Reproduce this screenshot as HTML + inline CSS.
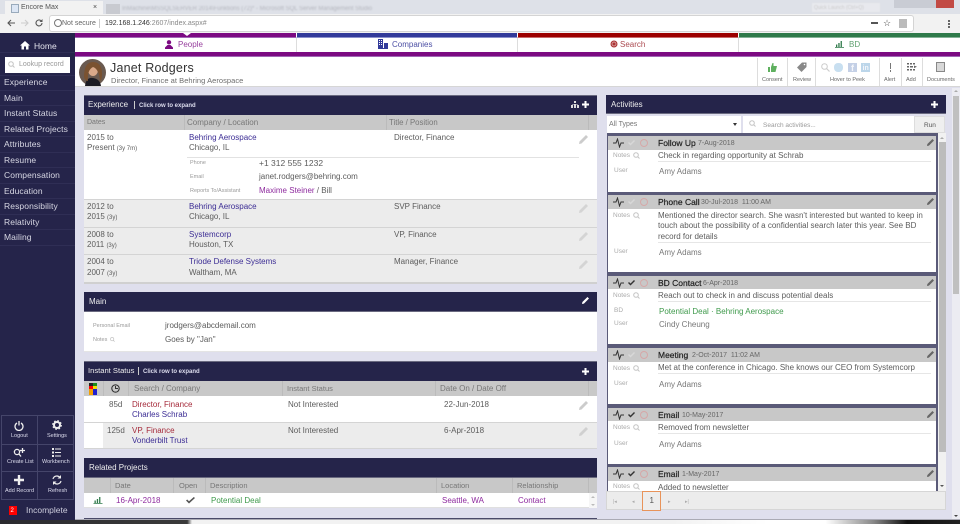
<!DOCTYPE html>
<html><head><meta charset="utf-8"><title>Encore Max</title>
<style>
html,body{margin:0;padding:0;width:960px;height:524px;overflow:hidden;background:#dfdfed;font-family:"Liberation Sans",sans-serif;color:#555}
body{filter:blur(.35px)}
div,span.a,svg.a{position:absolute}
.t{position:absolute;white-space:nowrap;line-height:10px;font-size:8px;color:#5c5c5c}
.s{font-size:8.5px;color:#d8d8e4;left:4px;letter-spacing:.1px}
.sep{left:0;width:75px;height:1px;background:#2f2e55}
.hd{background:#25244a}
.w{color:#fff}
.col{background:#c8c8c8}
.blue{color:#3b2c94}
.pur{color:#8e2a9e}
.red{color:#a52a3a}
.grn{color:#3f9a4c}
.lab{font-size:5.5px;color:#9a9a9a}
.nl{font-size:6.5px;color:#aaa}
.cardh{left:608px;width:328px;height:14px;background:#c8c8c8}
.cardb{left:608px;width:328px;background:#fff}
.tt{font-size:8.5px;color:#222;-webkit-text-stroke:.2px #222}
.dd{font-size:7px;color:#666}
.tl{font-size:5.5px;color:#666}
</style></head><body>

<svg width="0" height="0" style="position:absolute"><defs>
<path id="pen" d="M7 0 9 2 2.500 8.500 0 9 .5 6.500z"/>
<path id="pulse" d="M0 5h3l1.500-4 2 8L8 5h3" fill="none" stroke="#333" stroke-width="1"/>
<path id="chk" d="M0 3 2.500 5.500 7 1 6 0 2.500 3.500 1 2z"/>
<g id="mag"><circle cx="3" cy="3" r="2.300" fill="none" stroke="#c4c4c4"/><path d="M4.500 4.500 6.500 6.500" stroke="#c4c4c4"/></g>
</defs></svg>

<!-- browser chrome -->
<div style="left:0;top:0;width:960px;height:14px;background:#dee1e8"></div>
<div style="left:5px;top:1px;width:98px;height:13px;background:#f2f2f2"></div>
<div style="left:106px;top:4px;width:14px;height:10px;background:#c8cad0"></div>
<div class="t" style="left:21px;top:3px;font-size:7px;color:#555">Encore Max</div>
<div class="t" style="left:93px;top:3px;font-size:7px;color:#444">×</div>
<div style="left:11px;top:4px;width:6px;height:7px;background:#dce6f4;border:1px solid #9ab"></div>
<div class="t" style="left:122px;top:4px;font-size:6px;color:#b4b6be;filter:blur(.7px)">InMachine\MSSQLSERVER 2014\Funktions (72)* - Microsoft SQL Server Management Studio</div>
<div class="t" style="left:812px;top:3px;width:66px;height:9px;background:#e8e9ee;font-size:5px;color:#ccc;padding-left:2px;filter:blur(.4px)">Quick Launch (Ctrl+Q)</div>
<div style="left:894px;top:0;width:46px;height:8px;background:#c9ccd4"></div>
<div style="left:936px;top:0;width:18px;height:8px;background:#c24a44"></div>
<div style="left:0;top:14px;width:960px;height:19px;background:#f2f2f2"></div>
<div style="left:50px;top:16px;width:863px;height:15px;background:#fff;border-radius:2px;box-shadow:0 0 0 1px #d4d4d4"></div>
<svg class="a" style="left:7px;top:19px" width="8" height="8" viewBox="0 0 8 8"><path d="M8 4H1M4 1 1 4l3 3" fill="none" stroke="#555" stroke-width="1.100"/></svg>
<svg class="a" style="left:21px;top:19px" width="8" height="8" viewBox="0 0 8 8"><path d="M0 4h7M4 1l3 3-3 3" fill="none" stroke="#ccc" stroke-width="1.100"/></svg>
<svg class="a" style="left:35px;top:19px" width="8" height="8" viewBox="0 0 8 8"><path d="M7 4a3 3 0 1 1-1-2.300" fill="none" stroke="#555" stroke-width="1.100"/><path d="M7.500 0v3h-3z" fill="#555"/></svg>
<div style="left:54px;top:19px;width:6px;height:6px;border:1px solid #777;border-radius:50%"></div>
<div class="t" style="left:62px;top:19px;font-size:7px;color:#666">Not secure</div>
<div style="left:99px;top:19px;width:1px;height:9px;background:#ccc"></div>
<div class="t" style="left:105px;top:19px;font-size:7px;color:#333">192.168.1.246<span style="color:#888">:2607/index.aspx#</span></div>
<div style="left:871px;top:22px;width:7px;height:2px;background:#555"></div>
<div class="t" style="left:883px;top:18px;font-size:9px;color:#444">☆</div>
<div style="left:899px;top:19px;width:8px;height:9px;background:#bbb"></div>
<div style="left:948px;top:20px;width:2px;height:2px;background:#666;box-shadow:0 3px 0 #666,0 6px 0 #666"></div>

<!-- sidebar -->
<div style="left:0;top:33px;width:75px;height:487px;background:#25244a"></div>
<svg class="a" style="left:20px;top:40px" width="10" height="10" viewBox="0 0 10 10"><path d="M5 1 0 5.500h1.500V9.500h2.500V6.500h2V9.500h2.500V5.500H10Z" fill="#fff"/></svg>
<div class="t" style="left:34px;top:41px;font-size:8.500px;color:#e4e4ee">Home</div>
<div class="sep" style="top:52px"></div>
<div style="left:5px;top:57px;width:65px;height:16px;background:#fff"></div>
<svg class="a" style="left:8px;top:61px" width="7" height="7" viewBox="0 0 7 7"><use href="#mag"/></svg>
<div class="t" style="left:19px;top:60px;font-size:7px;color:#999">Lookup record</div>
<div class="sep" style="top:75px"></div>
<div class="t s" style="top:77px">Experience</div><div class="sep" style="top:90px"></div>
<div class="t s" style="top:93px">Main</div><div class="sep" style="top:105px"></div>
<div class="t s" style="top:108px">Instant Status</div><div class="sep" style="top:121px"></div>
<div class="t s" style="top:124px">Related Projects</div><div class="sep" style="top:136px"></div>
<div class="t s" style="top:139px">Attributes</div><div class="sep" style="top:152px"></div>
<div class="t s" style="top:155px">Resume</div><div class="sep" style="top:167px"></div>
<div class="t s" style="top:170px">Compensation</div><div class="sep" style="top:183px"></div>
<div class="t s" style="top:186px">Education</div><div class="sep" style="top:198px"></div>
<div class="t s" style="top:201px">Responsibility</div><div class="sep" style="top:214px"></div>
<div class="t s" style="top:217px">Relativity</div><div class="sep" style="top:229px"></div>
<div class="t s" style="top:232px">Mailing</div><div class="sep" style="top:245px"></div>

<div style="left:1px;top:415px;width:73px;height:85px;border:1px solid #45456a;box-sizing:border-box"></div>
<div style="left:37px;top:415px;width:1px;height:85px;background:#45456a"></div>
<div style="left:1px;top:444px;width:73px;height:1px;background:#45456a"></div>
<div style="left:1px;top:471px;width:73px;height:1px;background:#45456a"></div>
<svg class="a" style="left:14px;top:420px" width="10" height="11" viewBox="0 0 10 11"><path d="M3 3a4 4 0 1 0 4 0M5 1v4.500" fill="none" stroke="#eee" stroke-width="1.300"/></svg>
<div class="t" style="left:11px;top:431px;font-size:5.500px;color:#dde">Logout</div>
<svg class="a" style="left:52px;top:420px" width="10" height="10" viewBox="0 0 10 10"><circle cx="5" cy="5" r="3" fill="none" stroke="#eee" stroke-width="2"/><circle cx="5" cy="5" r="4.300" fill="none" stroke="#eee" stroke-dasharray="1.700 1.700" stroke-width="1.200"/></svg>
<div class="t" style="left:47px;top:431px;font-size:5.500px;color:#dde">Settings</div>
<svg class="a" style="left:13px;top:448px" width="12" height="9" viewBox="0 0 12 9"><circle cx="4" cy="4" r="2.600" fill="none" stroke="#eee" stroke-width="1.300"/><path d="M6 6 8 8.500M9.500 0v5M7 2.500h5" stroke="#eee" stroke-width="1.300"/></svg>
<div class="t" style="left:7px;top:457px;font-size:5.500px;color:#dde">Create List</div>
<svg class="a" style="left:52px;top:448px" width="9" height="9" viewBox="0 0 9 9"><path d="M0 0h2v2H0zM0 3.500h2v2H0zM0 7h2v2H0zM3 .5h6v1H3zM3 4h6v1H3zM3 7.500h6v1H3z" fill="#eee"/></svg>
<div class="t" style="left:42px;top:457px;font-size:5.500px;color:#dde">Workbench</div>
<svg class="a" style="left:14px;top:475px" width="10" height="10" viewBox="0 0 10 10"><path d="M3.800 0h2.400v3.800H10v2.400H6.200V10H3.800V6.200H0V3.800h3.800z" fill="#eee"/></svg>
<div class="t" style="left:5px;top:486px;font-size:5.500px;color:#dde">Add Record</div>
<svg class="a" style="left:52px;top:475px" width="10" height="10" viewBox="0 0 10 10"><path d="M1 4a4 4 0 0 1 7-1.500M9 6a4 4 0 0 1-7 1.500" fill="none" stroke="#eee" stroke-width="1.200"/><path d="M9 0v3.500H5.500zM1 10V6.500h3.500z" fill="#eee"/></svg>
<div class="t" style="left:48px;top:486px;font-size:5.500px;color:#dde">Refresh</div>
<div style="left:9px;top:506px;width:8px;height:9px;background:#f00"></div>
<div class="t" style="left:10.500px;top:506px;font-size:6px;color:#fff">2</div>
<div class="t" style="left:26px;top:505px;font-size:8.500px;color:#ccccdc">Incomplete</div>

<!-- nav tabs -->
<div style="left:75px;top:33px;width:885px;height:24px;background:#fff"></div>
<div style="left:75px;top:33px;width:221px;height:5px;background:#7c0a82;border-bottom:1px solid #a267b5;box-sizing:border-box"></div>
<div style="left:296px;top:33px;width:221px;height:5px;background:#323a9a;border-bottom:1px solid #8b90cc;box-sizing:border-box;border-left:1px solid #fff"></div>
<div style="left:517px;top:33px;width:221px;height:5px;background:#9c0000;border-bottom:1px solid #c86a6a;box-sizing:border-box;border-left:1px solid #fff"></div>
<div style="left:738px;top:33px;width:222px;height:5px;background:#2f7a4a;border-bottom:1px solid #84b296;box-sizing:border-box;border-left:1px solid #fff"></div>
<div style="left:183px;top:33px;width:0;height:0;border-left:4px solid transparent;border-right:4px solid transparent;border-top:3px solid #fff"></div>
<div style="left:296px;top:38px;width:1px;height:14px;background:#ddd"></div>
<div style="left:517px;top:38px;width:1px;height:14px;background:#ddd"></div>
<div style="left:738px;top:38px;width:1px;height:14px;background:#ddd"></div>
<div style="left:75px;top:52px;width:885px;height:5px;background:#7c0a82;border-bottom:1px solid #a267b5;box-sizing:border-box"></div>
<svg class="a" style="left:165px;top:40px" width="8" height="9" viewBox="0 0 8 9"><circle cx="4" cy="2.300" r="2.200" fill="#7c0a82"/><path d="M0 9V7.500L2.500 5h3L8 7.500V9z" fill="#7c0a82"/></svg>
<div class="t" style="left:178px;top:39.500px;font-size:8px;color:#98409e">People</div>
<svg class="a" style="left:378px;top:39px" width="10" height="10" viewBox="0 0 10 10"><path d="M0 0h5v9H0zM6 4h4v5H6z" fill="#323a9a"/><path d="M1 1.500h1M3 1.500h1M1 3.500h1M3 3.500h1M1 5.500h1M3 5.500h1" stroke="#fff"/><path d="M0 9.500h10" stroke="#323a9a"/></svg>
<div class="t" style="left:392px;top:39.500px;font-size:8px;color:#4c4fa4">Companies</div>
<svg class="a" style="left:610px;top:40px" width="8" height="8" viewBox="0 0 8 8"><circle cx="4" cy="4" r="3.500" fill="#a33"/><circle cx="4" cy="4" r="2" fill="none" stroke="#e8c0c0" stroke-width=".7"/></svg>
<div class="t" style="left:620px;top:39.500px;font-size:8px;color:#ab4a50">Search</div>
<svg class="a" style="left:835px;top:40px" width="9" height="8" viewBox="0 0 9 8"><path d="M1 4.500h1.300V7H1zM3.300 3H4.600V7H3.300zM5.600 1H6.900V7H5.600zM0 7.300h9V8H0z" fill="#2f7a4a"/></svg>
<div class="t" style="left:849px;top:39.500px;font-size:8px;color:#5fa06f">BD</div>

<!-- profile header -->
<div style="left:75px;top:57px;width:885px;height:30px;background:#fff;border-bottom:1px solid #d6d6d6;box-sizing:border-box"></div>
<svg class="a" style="left:79px;top:59px" width="27" height="27" viewBox="0 0 27 27"><circle cx="13.500" cy="13.500" r="13.500" fill="#6a5a50"/><ellipse cx="14" cy="11" rx="5" ry="6" fill="#d9a98a"/><path d="M6 27q1-9 8-8t8 8z" fill="#1c1c24"/><path d="M5 18Q5 3 14 3t9 12q0 6-2 7-1-12-7-14-6 3-5 14-3 0-4-4z" fill="#7a5230"/></svg>
<div class="t" style="left:110px;top:62px;font-size:12.500px;line-height:13px;color:#333;letter-spacing:.2px">Janet Rodgers</div>
<div class="t" style="left:111px;top:76px;font-size:7.500px;color:#6e6e6e;letter-spacing:.05px">Director, Finance at Behring Aerospace</div>
<div style="left:757px;top:58px;width:1px;height:28px;background:#ddd"></div>
<div style="left:787px;top:58px;width:1px;height:28px;background:#ddd"></div>
<div style="left:815px;top:58px;width:1px;height:28px;background:#ddd"></div>
<div style="left:879px;top:58px;width:1px;height:28px;background:#ddd"></div>
<div style="left:901px;top:58px;width:1px;height:28px;background:#ddd"></div>
<div style="left:922px;top:58px;width:1px;height:28px;background:#ddd"></div>
<svg class="a" style="left:768px;top:63px" width="9" height="9" viewBox="0 0 9 9"><path d="M0 4h2v5H0zM3 4l1.500-4h1l0 3H9L7.500 9H3z" fill="#5fb05f"/></svg>
<svg class="a" style="left:797px;top:62px" width="10" height="10" viewBox="0 0 10 10"><path d="M5 .5h4.500V5L4.500 10 0 5.500z" fill="#888"/><circle cx="7.500" cy="2.500" r=".8" fill="#fff"/></svg>
<svg class="a" style="left:821px;top:63px" width="9" height="9" viewBox="0 0 9 9"><circle cx="3.500" cy="3.500" r="2.800" fill="none" stroke="#ccc"/><path d="M5.500 5.500 8.500 8.500" stroke="#ccc" stroke-width="1.200"/></svg>
<div style="left:834px;top:63px;width:9px;height:9px;background:#c8dff0;border-radius:4px"></div>
<div style="left:848px;top:63px;width:9px;height:9px;background:#c4d0e6"></div>
<div class="t" style="left:851px;top:63px;font-size:9px;font-weight:bold;color:#f4f6fb">f</div>
<div style="left:861px;top:63px;width:9px;height:9px;background:#bcd6ea"></div>
<div class="t" style="left:862.500px;top:64px;font-size:7px;font-weight:bold;color:#f4f6fb">in</div>
<div style="left:889.500px;top:63px;width:1.500px;height:6px;background:#777"></div>
<div style="left:889.500px;top:70px;width:1.500px;height:1.500px;background:#777"></div>
<svg class="a" style="left:907px;top:63px" width="10" height="8" viewBox="0 0 10 8"><path d="M0 0h2v1.500H0zM3 0h2v1.500H3zM6 0h2v1.500H6zM0 3h2v1.500H0zM3 3h3v1.500H3zM0 6h2v1.500H0zM3 6h2v1.500H3zM6 6h2v1.500H6zM7 2.500l3 1.300-3 1.300z" fill="#666"/></svg>
<div style="left:936px;top:62px;width:7px;height:8px;border:1px solid #888;background:#d8d8d8"></div>
<div class="t tl" style="left:762px;top:75px">Consent</div>
<div class="t tl" style="left:793px;top:75px">Review</div>
<div class="t tl" style="left:830px;top:75px">Hover to Peek</div>
<div class="t tl" style="left:884px;top:75px">Alert</div>
<div class="t tl" style="left:906px;top:75px">Add</div>
<div class="t tl" style="left:927px;top:75px">Documents</div>

<!-- Experience panel -->
<div class="hd" style="left:84px;top:95px;width:513px;height:20px;border-top:1px solid #6a6a80;box-sizing:border-box"></div>
<div class="t w" style="left:88px;top:100px;font-size:8px;color:#eee">Experience</div>
<div style="left:134px;top:101px;width:1px;height:8px;background:#ccc"></div>
<div class="t w" style="left:139px;top:101px;font-size:6px;font-weight:bold;color:#dde">Click row to expand</div>
<svg class="a" style="left:571px;top:101px" width="8" height="7" viewBox="0 0 8 7"><path d="M3 0h2v2H3zM0 4h2v3H0zM3 3h2v4H3zM6 4h2v3H6zM1 3h6v.5H1z" fill="#ddd"/></svg>
<svg class="a" style="left:582px;top:101px" width="7" height="7" viewBox="0 0 7 7"><path d="M2.500 0h2v2.500H7v2H4.500V7h-2V4.500H0v-2h2.500z" fill="#fff"/></svg>
<div class="col" style="left:84px;top:115px;width:513px;height:15px"></div>
<div style="left:184px;top:115px;width:1px;height:15px;background:#bbb"></div>
<div style="left:386px;top:115px;width:1px;height:15px;background:#bbb"></div>
<div style="left:588px;top:115px;width:1px;height:15px;background:#bbb"></div>
<div class="t" style="left:87px;top:118px;font-size:7px;color:#777">Dates</div>
<div class="t" style="left:187px;top:118px;font-size:8px;color:#777">Company / Location</div>
<div class="t" style="left:389px;top:118px;font-size:7.800px;color:#777">Title / Position</div>
<div style="left:84px;top:130px;width:513px;height:69px;background:#fff"></div>
<div style="left:84px;top:199px;width:513px;height:85px;background:#ececec"></div>
<div style="left:84px;top:199px;width:513px;height:1px;background:#d4d4d4"></div>
<div style="left:84px;top:227px;width:513px;height:1px;background:#d4d4d4"></div>
<div style="left:84px;top:254px;width:513px;height:1px;background:#d4d4d4"></div>
<div style="left:84px;top:282px;width:513px;height:2px;background:#d0d0d0"></div>
<div style="left:187px;top:157px;width:392px;height:1px;background:#e2e2e2"></div>

<div class="t" style="left:87px;top:133px">2015 to</div>
<div class="t" style="left:87px;top:143px">Present <span style="font-size:6px">(3y 7m)</span></div>
<div class="t blue" style="left:189px;top:133px">Behring Aerospace</div>
<div class="t" style="left:189px;top:143px">Chicago, IL</div>
<div class="t" style="left:394px;top:133px">Director, Finance</div>
<div class="t lab" style="left:190px;top:158px">Phone</div>
<div class="t" style="left:259px;top:158px;font-size:8.500px">+1 312 555 1232</div>
<div class="t lab" style="left:190px;top:172px">Email</div>
<div class="t" style="left:259px;top:172px">janet.rodgers@behring.com</div>
<div class="t lab" style="left:190px;top:186px">Reports To/Assistant</div>
<div class="t" style="left:259px;top:186px"><span class="pur">Maxime Steiner</span> / Bill</div>

<div class="t" style="left:87px;top:202px">2012 to</div>
<div class="t" style="left:87px;top:212px">2015 <span style="font-size:6px">(3y)</span></div>
<div class="t blue" style="left:189px;top:202px">Behring Aerospace</div>
<div class="t" style="left:189px;top:212px">Chicago, IL</div>
<div class="t" style="left:394px;top:202px">SVP Finance</div>

<div class="t" style="left:87px;top:230px">2008 to</div>
<div class="t" style="left:87px;top:240px">2011 <span style="font-size:6px">(3y)</span></div>
<div class="t blue" style="left:189px;top:230px">Systemcorp</div>
<div class="t" style="left:189px;top:240px">Houston, TX</div>
<div class="t" style="left:394px;top:230px">VP, Finance</div>

<div class="t" style="left:87px;top:257px">2004 to</div>
<div class="t" style="left:87px;top:268px">2007 <span style="font-size:6px">(3y)</span></div>
<div class="t blue" style="left:189px;top:257px">Triode Defense Systems</div>
<div class="t" style="left:189px;top:268px">Waltham, MA</div>
<div class="t" style="left:394px;top:257px">Manager, Finance</div>

<svg class="a" style="left:579px;top:135px" width="9" height="9"><use href="#pen" fill="#ccc"/></svg>
<svg class="a" style="left:579px;top:204px" width="9" height="9"><use href="#pen" fill="#d4d4d4"/></svg>
<svg class="a" style="left:579px;top:232px" width="9" height="9"><use href="#pen" fill="#d4d4d4"/></svg>
<svg class="a" style="left:579px;top:260px" width="9" height="9"><use href="#pen" fill="#d4d4d4"/></svg>

<!-- Main panel -->
<div class="hd" style="left:84px;top:292px;width:513px;height:20px;border-bottom:1px solid #6a6a80;box-sizing:border-box"></div>
<div class="t w" style="left:89px;top:297px;font-size:8px;color:#eee">Main</div>
<svg class="a" style="left:582px;top:297px" width="7" height="7" viewBox="0 0 9 9"><use href="#pen" fill="#fff"/></svg>
<div style="left:84px;top:312px;width:513px;height:40px;background:#fff;border-bottom:1px solid #e4e4e4;box-sizing:border-box"></div>
<div class="t lab" style="left:93px;top:321px">Personal Email</div>
<div class="t" style="left:165px;top:321px">jrodgers@abcdemail.com</div>
<div class="t lab" style="left:93px;top:335px">Notes</div>
<svg class="a" style="left:110px;top:337px" width="5" height="5" viewBox="0 0 7 7"><use href="#mag"/></svg>
<div class="t" style="left:165px;top:335px">Goes by "Jan"</div>

<!-- Instant status -->
<div class="hd" style="left:84px;top:361px;width:513px;height:20px;border-top:1px solid #6a6a80;box-sizing:border-box"></div>
<div class="t w" style="left:88px;top:366px;font-size:7.600px;color:#eee">Instant Status</div>
<div style="left:138px;top:367px;width:1px;height:8px;background:#ccc"></div>
<div class="t w" style="left:143px;top:367px;font-size:6px;font-weight:bold;color:#dde">Click row to expand</div>
<svg class="a" style="left:582px;top:368px" width="7" height="7" viewBox="0 0 7 7"><path d="M2.500 0h2v2.500H7v2H4.500V7h-2V4.500H0v-2h2.500z" fill="#fff"/></svg>
<div class="col" style="left:84px;top:381px;width:513px;height:15px"></div>
<div style="left:103px;top:381px;width:1px;height:15px;background:#bbb"></div>
<div style="left:128px;top:381px;width:1px;height:15px;background:#bbb"></div>
<div style="left:282px;top:381px;width:1px;height:15px;background:#bbb"></div>
<div style="left:435px;top:381px;width:1px;height:15px;background:#bbb"></div>
<div style="left:588px;top:381px;width:1px;height:15px;background:#bbb"></div>
<div style="left:89px;top:383px;width:4px;height:6px;background:#f00"></div><div style="left:93px;top:383px;width:4px;height:6px;background:#1a8a1a"></div>
<div style="left:89px;top:389px;width:4px;height:6px;background:#f4a000"></div><div style="left:93px;top:389px;width:4px;height:6px;background:#2020d0"></div>
<div style="left:89px;top:383px;width:4px;height:3px;background:#222"></div><div style="left:93px;top:386px;width:4px;height:3px;background:#f0e000"></div>
<svg class="a" style="left:111px;top:384px" width="9" height="9" viewBox="0 0 9 9"><circle cx="4.500" cy="4.500" r="3.700" fill="none" stroke="#333" stroke-width="1.100"/><path d="M4.500 2v2.500H7" fill="none" stroke="#333"/></svg>
<div class="t" style="left:134px;top:384px;color:#777;font-size:8px">Search / Company</div>
<div class="t" style="left:287px;top:384px;color:#777;font-size:7.500px">Instant Status</div>
<div class="t" style="left:440px;top:384px;color:#777;font-size:8px">Date On / Date Off</div>
<div style="left:84px;top:396px;width:513px;height:26px;background:#fff"></div>
<div style="left:84px;top:422px;width:513px;height:1px;background:#d4d4d4"></div>
<div style="left:103px;top:423px;width:494px;height:25px;background:#ececec"></div>
<div style="left:84px;top:423px;width:19px;height:25px;background:#fff"></div>
<div style="left:84px;top:448px;width:513px;height:1px;background:#d4d4d4"></div>
<div class="t" style="left:109px;top:400px">85d</div>
<div class="t red" style="left:132px;top:400px">Director, Finance</div>
<div class="t blue" style="left:132px;top:410px">Charles Schrab</div>
<div class="t" style="left:288px;top:400px">Not Interested</div>
<div class="t" style="left:444px;top:400px">22-Jun-2018</div>
<div class="t" style="left:107px;top:426px">125d</div>
<div class="t red" style="left:132px;top:426px">VP, Finance</div>
<div class="t blue" style="left:132px;top:436px">Vonderbilt Trust</div>
<div class="t" style="left:288px;top:426px">Not Interested</div>
<div class="t" style="left:444px;top:426px">6-Apr-2018</div>
<svg class="a" style="left:579px;top:401px" width="9" height="9"><use href="#pen" fill="#ccc"/></svg>
<svg class="a" style="left:579px;top:427px" width="9" height="9"><use href="#pen" fill="#d0d0d0"/></svg>

<!-- Related projects -->
<div class="hd" style="left:84px;top:458px;width:513px;height:20px;border-bottom:1px solid #6a6a80;box-sizing:border-box"></div>
<div class="t w" style="left:89px;top:463px;font-size:8px;color:#eee">Related Projects</div>
<div class="col" style="left:84px;top:478px;width:513px;height:15px"></div>
<div style="left:110px;top:478px;width:1px;height:15px;background:#bbb"></div>
<div style="left:173px;top:478px;width:1px;height:15px;background:#bbb"></div>
<div style="left:205px;top:478px;width:1px;height:15px;background:#bbb"></div>
<div style="left:436px;top:478px;width:1px;height:15px;background:#bbb"></div>
<div style="left:512px;top:478px;width:1px;height:15px;background:#bbb"></div>
<div style="left:588px;top:478px;width:1px;height:15px;background:#bbb"></div>
<div class="t" style="left:115px;top:481px;color:#777;font-size:7.500px">Date</div>
<div class="t" style="left:179px;top:481px;color:#777;font-size:7.500px">Open</div>
<div class="t" style="left:210px;top:481px;color:#777;font-size:7.500px">Description</div>
<div class="t" style="left:441px;top:481px;color:#777;font-size:7.500px">Location</div>
<div class="t" style="left:517px;top:481px;color:#777;font-size:7.500px">Relationship</div>
<div style="left:84px;top:493px;width:513px;height:15px;background:#fff;border-bottom:1px solid #e0e0e0;box-sizing:border-box"></div>
<svg class="a" style="left:93px;top:496px" width="10" height="8" viewBox="0 0 9 8"><path d="M1 4.500h1.300V7H1zM3.300 3H4.600V7H3.300zM5.600 1H6.900V7H5.600zM0 7.300h9V8H0z" fill="#2f7a4a"/></svg>
<div class="t pur" style="left:116px;top:496px">16-Apr-2018</div>
<svg class="a" style="left:186px;top:497px" width="9" height="7" viewBox="0 0 9 7"><path d="M0 3.500 3 6.500 9 1 7.800 0 3 4.300 1.200 2.500z" fill="#555"/></svg>
<div class="t grn" style="left:211px;top:496px">Potential Deal</div>
<div class="t pur" style="left:442px;top:496px">Seattle, WA</div>
<div class="t pur" style="left:518px;top:496px">Contact</div>
<div style="left:589px;top:493px;width:8px;height:15px;background:#f6f6f6"></div>
<div style="left:591px;top:496px;width:0;height:0;border-left:2px solid transparent;border-right:2px solid transparent;border-bottom:2px solid #bbb"></div>
<div style="left:591px;top:504px;width:0;height:0;border-left:2px solid transparent;border-right:2px solid transparent;border-top:2px solid #bbb"></div>
<div style="left:84px;top:518px;width:513px;height:2px;background:#4a4a68"></div>

<!-- Activities -->
<div class="hd" style="left:606px;top:95px;width:340px;height:19px;border-bottom:1px solid #6a6a80;box-sizing:border-box"></div>
<div class="t w" style="left:611px;top:100px;font-size:8px;color:#eee">Activities</div>
<svg class="a" style="left:931px;top:101px" width="7" height="7" viewBox="0 0 7 7"><path d="M2.500 0h2v2.500H7v2H4.500V7h-2V4.500H0v-2h2.500z" fill="#fff"/></svg>
<div style="left:607px;top:116px;width:134px;height:17px;background:#fff"></div>
<div style="left:743px;top:116px;width:171px;height:17px;background:#fff"></div>
<div style="left:914px;top:116px;width:31px;height:17px;background:#efefef;border:1px solid #ddd;box-sizing:border-box"></div>
<div class="t" style="left:609px;top:120px;font-size:7px;color:#777">All Types</div>
<div style="left:733px;top:123px;width:0;height:0;border-left:2.500px solid transparent;border-right:2.500px solid transparent;border-top:3px solid #333"></div>
<svg class="a" style="left:749px;top:120px" width="7" height="7" viewBox="0 0 7 7"><use href="#mag"/></svg>
<div class="t" style="left:763px;top:121px;font-size:6.500px;color:#999">Search activities...</div>
<div class="t" style="left:924px;top:121px;font-size:6.500px;color:#555">Run</div>

<div style="left:607px;top:133px;width:331px;height:358px;background:#5a5a78"></div>
<!-- card 1 -->
<div class="cardh" style="top:136px"></div><div class="cardb" style="top:150px;height:42px"></div>
<div class="t tt" style="left:658px;top:138px">Follow Up</div><div class="t dd" style="left:698px;top:139px">7-Aug-2018</div>
<div class="t nl" style="left:613px;top:151px">Notes</div><svg class="a" style="left:633px;top:152px" width="7" height="7"><use href="#mag"/></svg>
<div class="t" style="left:658px;top:151px;font-size:8px">Check in regarding opportunity at Schrab</div>
<div style="left:658px;top:161px;width:273px;height:1px;background:#e6e6e6"></div>
<div class="nl t" style="left:614px;top:166px">User</div>
<div class="t" style="left:659px;top:167px;color:#777">Amy Adams</div>
<!-- card 2 -->
<div class="cardh" style="top:195px"></div><div class="cardb" style="top:209px;height:63px"></div>
<div class="t tt" style="left:658px;top:197px">Phone Call</div><div class="t dd" style="left:701px;top:198px">30-Jul-2018 &nbsp;11:00 AM</div>
<div class="t nl" style="left:613px;top:211px">Notes</div><svg class="a" style="left:633px;top:212px" width="7" height="7"><use href="#mag"/></svg>
<div class="t" style="left:658px;top:211px;font-size:8px">Mentioned the director search. She wasn't interested but wanted to keep in</div>
<div class="t" style="left:658px;top:221px;font-size:8px">touch about the possibility of a confidential search later this year. See BD</div>
<div class="t" style="left:658px;top:232px;font-size:8px">record for details</div>
<div style="left:658px;top:242px;width:273px;height:1px;background:#e6e6e6"></div>
<div class="nl t" style="left:614px;top:247px">User</div>
<div class="t" style="left:659px;top:248px;color:#777">Amy Adams</div>
<!-- card 3 -->
<div class="cardh" style="top:276px"></div><div class="cardb" style="top:289px;height:55px"></div>
<div class="t tt" style="left:658px;top:278px">BD Contact</div><div class="t dd" style="left:703px;top:279px">6-Apr-2018</div>
<div class="t nl" style="left:613px;top:291px">Notes</div><svg class="a" style="left:633px;top:292px" width="7" height="7"><use href="#mag"/></svg>
<div class="t" style="left:658px;top:291px;font-size:8px">Reach out to check in and discuss potential deals</div>
<div style="left:658px;top:301px;width:273px;height:1px;background:#e6e6e6"></div>
<div class="nl t" style="left:614px;top:306px">BD</div>
<div class="t grn" style="left:659px;top:307px">Potential Deal · Behring Aerospace</div>
<div class="nl t" style="left:614px;top:319px">User</div>
<div class="t" style="left:659px;top:320px;color:#777">Cindy Cheung</div>
<!-- card 4 -->
<div class="cardh" style="top:348px"></div><div class="cardb" style="top:362px;height:42px"></div>
<div class="t tt" style="left:658px;top:350px">Meeting</div><div class="t dd" style="left:692px;top:351px">2-Oct-2017 &nbsp;11:02 AM</div>
<div class="t nl" style="left:613px;top:364px">Notes</div><svg class="a" style="left:633px;top:365px" width="7" height="7"><use href="#mag"/></svg>
<div class="t" style="left:658px;top:363px;font-size:8px">Met at the conference in Chicago. She knows our CEO from Systemcorp</div>
<div style="left:658px;top:373px;width:273px;height:1px;background:#e6e6e6"></div>
<div class="nl t" style="left:614px;top:379px">User</div>
<div class="t" style="left:659px;top:380px;color:#777">Amy Adams</div>
<!-- card 5 -->
<div class="cardh" style="top:408px"></div><div class="cardb" style="top:421px;height:43px"></div>
<div class="t tt" style="left:658px;top:410px">Email</div><div class="t dd" style="left:682px;top:411px">10-May-2017</div>
<div class="t nl" style="left:613px;top:423px">Notes</div><svg class="a" style="left:633px;top:424px" width="7" height="7"><use href="#mag"/></svg>
<div class="t" style="left:658px;top:423px;font-size:8px">Removed from newsletter</div>
<div style="left:658px;top:433px;width:273px;height:1px;background:#e6e6e6"></div>
<div class="nl t" style="left:614px;top:439px">User</div>
<div class="t" style="left:659px;top:440px;color:#777">Amy Adams</div>
<!-- card 6 -->
<div class="cardh" style="top:467px"></div><div class="cardb" style="top:481px;height:10px;overflow:hidden"></div>
<div class="t tt" style="left:658px;top:469px">Email</div><div class="t dd" style="left:682px;top:470px">1-May-2017</div>
<div class="t nl" style="left:613px;top:482px">Notes</div><svg class="a" style="left:633px;top:483px" width="7" height="7"><use href="#mag"/></svg>
<div class="t" style="left:658px;top:483px;font-size:8px">Added to newsletter</div>

<!-- card icons -->
<svg class="a" style="left:613px;top:138px" width="11" height="10"><use href="#pulse"/></svg>
<svg class="a" style="left:628px;top:140px" width="7" height="6"><use href="#chk" fill="#d8d8d8"/></svg>
<div style="left:640px;top:139px;width:6px;height:6px;border:1px solid #d6a8a8;border-radius:50%"></div>
<svg class="a" style="left:927px;top:139px" width="7" height="7" viewBox="0 0 9 9"><use href="#pen" fill="#666"/></svg>
<svg class="a" style="left:613px;top:197px" width="11" height="10"><use href="#pulse"/></svg>
<svg class="a" style="left:628px;top:199px" width="7" height="6"><use href="#chk" fill="#d8d8d8"/></svg>
<div style="left:640px;top:198px;width:6px;height:6px;border:1px solid #d6a8a8;border-radius:50%"></div>
<svg class="a" style="left:927px;top:198px" width="7" height="7" viewBox="0 0 9 9"><use href="#pen" fill="#666"/></svg>
<svg class="a" style="left:613px;top:278px" width="11" height="10"><use href="#pulse"/></svg>
<svg class="a" style="left:628px;top:280px" width="7" height="6"><use href="#chk" fill="#333"/></svg>
<div style="left:640px;top:279px;width:6px;height:6px;border:1px solid #d6a8a8;border-radius:50%"></div>
<svg class="a" style="left:927px;top:279px" width="7" height="7" viewBox="0 0 9 9"><use href="#pen" fill="#666"/></svg>
<svg class="a" style="left:613px;top:350px" width="11" height="10"><use href="#pulse"/></svg>
<svg class="a" style="left:628px;top:352px" width="7" height="6"><use href="#chk" fill="#d8d8d8"/></svg>
<div style="left:640px;top:351px;width:6px;height:6px;border:1px solid #d6a8a8;border-radius:50%"></div>
<svg class="a" style="left:927px;top:351px" width="7" height="7" viewBox="0 0 9 9"><use href="#pen" fill="#666"/></svg>
<svg class="a" style="left:613px;top:410px" width="11" height="10"><use href="#pulse"/></svg>
<svg class="a" style="left:628px;top:412px" width="7" height="6"><use href="#chk" fill="#333"/></svg>
<div style="left:640px;top:411px;width:6px;height:6px;border:1px solid #d6a8a8;border-radius:50%"></div>
<svg class="a" style="left:927px;top:411px" width="7" height="7" viewBox="0 0 9 9"><use href="#pen" fill="#666"/></svg>
<svg class="a" style="left:613px;top:469px" width="11" height="10"><use href="#pulse"/></svg>
<svg class="a" style="left:628px;top:471px" width="7" height="6"><use href="#chk" fill="#333"/></svg>
<div style="left:640px;top:470px;width:6px;height:6px;border:1px solid #d6a8a8;border-radius:50%"></div>
<svg class="a" style="left:927px;top:470px" width="7" height="7" viewBox="0 0 9 9"><use href="#pen" fill="#666"/></svg>

<!-- inner scrollbar -->
<div style="left:938px;top:133px;width:8px;height:358px;background:#f1f1f1"></div>
<div style="left:939px;top:142px;width:7px;height:310px;background:#bcbcbc"></div>
<div style="left:940px;top:137px;width:0;height:0;border-left:2px solid transparent;border-right:2px solid transparent;border-bottom:2px solid #aaa"></div>
<div style="left:940px;top:485px;width:0;height:0;border-left:2px solid transparent;border-right:2px solid transparent;border-top:2px solid #555"></div>

<!-- pager -->
<div style="left:606px;top:491px;width:340px;height:19px;background:#ececec;border:1px solid #d6d6d6;box-sizing:border-box"></div>
<div style="left:642px;top:491px;width:19px;height:20px;border:1px solid #e8935a;box-sizing:border-box;background:#ededed"></div>
<div class="t" style="left:649.500px;top:496px;font-size:8px;color:#555">1</div>
<div class="t" style="left:613px;top:497px;font-size:5px;color:#aaa">|◂</div>
<div class="t" style="left:632px;top:497px;font-size:5px;color:#aaa">◂</div>
<div class="t" style="left:668px;top:497px;font-size:5px;color:#aaa">▸</div>
<div class="t" style="left:685px;top:497px;font-size:5px;color:#aaa">▸|</div>

<!-- page scrollbar -->
<div style="left:952px;top:88px;width:8px;height:432px;background:#ececf2"></div>
<div style="left:953px;top:96px;width:6px;height:198px;background:#c0c0c0"></div>
<div style="left:954px;top:90px;width:0;height:0;border-left:2px solid transparent;border-right:2px solid transparent;border-bottom:2px solid #aaa"></div>
<div style="left:954px;top:515px;width:0;height:0;border-left:2px solid transparent;border-right:2px solid transparent;border-top:2px solid #444"></div>

<!-- taskbar -->
<div style="left:0;top:520px;width:960px;height:4px;background:linear-gradient(90deg,#2a2a2e 0,#3a3a3a 19.500%,#f2f2f2 20%,#f2f2f2 70%,#fff 80%,#fff 86%,#888 91%,#111 94.500%,#222 100%)"></div>
<div style="left:75px;top:519px;width:885px;height:1px;background:#aaaab4"></div>
</body></html>
